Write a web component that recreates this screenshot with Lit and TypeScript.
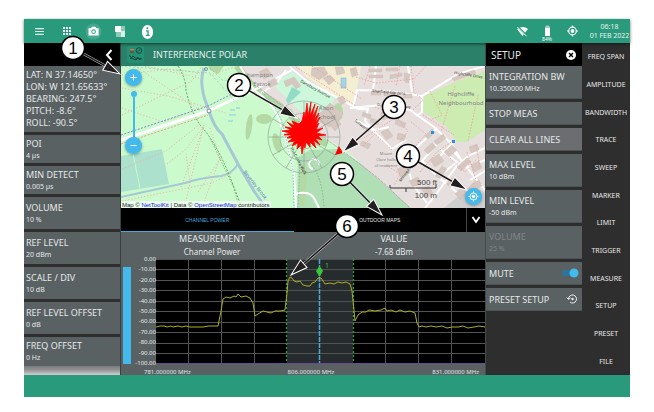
import { LitElement, html, svg, css } from "lit";
import { customElement, state } from "lit/decorators.js";

type Item = { label: string; value?: string; kind?: string };

const READOUTS: Item[] = [
  { label: "POI", value: "4 µs", kind: "short" },
  { label: "MIN DETECT", value: "0.005 µs", kind: "short" },
  { label: "VOLUME", value: "10 %" },
  { label: "REF LEVEL", value: "20 dBm" },
  { label: "SCALE / DIV", value: "10 dB" },
  { label: "REF LEVEL OFFSET", value: "0 dB" },
  { label: "FREQ OFFSET", value: "0 Hz", kind: "last" },
];
const MENUS = ["FREQ SPAN", "AMPLITUDE", "BANDWIDTH", "TRACE", "SWEEP", "MARKER", "LIMIT", "TRIGGER", "MEASURE", "SETUP", "PRESET", "FILE"];

const BUILDINGS = [
  "M259 72l8-4 5 7-8 4z", "M267 82l8-4 3 6-8 4z", "M284 81l10-4 7 9-5 3-4-5-6 3z", "M312 68l12-1 4 7-9 6-8-5z", "M323 78l7-3 5 5-6 5z",
  "M335 67h8l2 6-8 2z", "M350 69l6-2 2 8-6 2z", "M318 115l12-12 13 10-6 10-8 4-9-5z", "M326 121l8-5 7 8-6 7z", "M337 98l6-2 3 6-5 3z",
  "M369 69h13v3h-13z", "M386 68h12v3h-12z", "M369 75h14v3h-14z", "M390 75l12-2v3l-12 3z", "M404 73l6 1-1 9-4-1z", "M452 78l22-8 2 3-22 8z",
  "M371 91h10v4h-10z", "M384 92h11v4h-11z", "M403 94h9v4h-9z", "M386 102h9v4h-9z", "M363 112l8 3-1 4-8-3z", "M371 118l8 3-1 4-8-3z",
  "M380 113l7-3 3 7-7 3z", "M396 119l10 4-2 5-9-4z", "M381 132l7-3 5 7-7 4z", "M398 133l8 2-2 6-7-2z", "M362 141l9 3-3 5-8-4z",
  "M425 136l7-7 3 3-7 7z", "M434 141l9-7 3 4-9 7z", "M424 150l8-7 4 4-8 7z", "M430 160l9-6 5 7-9 6z", "M444 152l8-7 5 5-8 7z",
  "M435 176l7-10 5 3-7 10z", "M446 184l8-7 4 5-8 6z", "M457 167l10-9 4 4-10 9z", "M469 147l8-3 2 6-8 3z", "M471 165l8-4 3 7-8 4z",
  "M397 169l9-4 4 8-9 5z", "M409 181l9-4 3 6-8 4z", "M422 189l7-3 4 7-7 4z", "M455 194l7-7 5 5-7 7z", "M472 184l7-4 3 6-7 4z",
];
const PATHS = [
  "M122 88l46 8 58 17", "M122 75l46-6 33 4", "M122 108l42 14 36-14", "M122 115l70-34 10-15", "M135 66l65 44", "M167 164l18-14 20-25",
  "M204 125l-14 58", "M181 187l22-58", "M122 201l90-18 20-10", "M184 208l6-24-4-30", "M210 128l10 30-18 50", "M222 156l-24 36",
  "M122 169l44-18 38-30", "M210 75l28-9", "M145 66l54 12",
];
const STREET_PATHS = [
  "M356 77l20 6 38-4 12-13", "M370 66l-6 20", "M400 66l-4 20", "M411 66l3 26 9 8-11 11", "M392 98v22l-28 18", "M375 107l20 8 13 16-9 12",
  "M411 122l15 12-16 18 6 14", "M430 91l12 24-12 5", "M455 86l-14 46", "M420 172l17-20 17-12", "M450 158l15 14 11-12", "M467 152l9 28-16 20",
  "M363 146l12-12 18 17", "M386 165l14 9-6 12", "M478 95l-10 46", "M296 67l60 39", "M312 66l50 33", "M423 115l31 20", "M476 145l4 22",
];
const ROADS = [
  "M254 90c18 12 24 24 28 38c5 14 9 30 12 48l2 32", "M295 194q16-4 20 6l4 8", "M240 66l14 24 38-20", "M290 67l18 15 50 27h10l-3 12 9 10 18 18 14-9",
  "M350 108l32-3 28 5 24 17 17 16 12 20 22 27", "M353 107l4-17 32 1 33 5 36-22 27-8", "M422 96v16l-6 4", "M355 120l20 10 14-3",
  "M437 128l-21 20-9 17 6 20 14 18", "M445 135l-23 26 16 16 19-15-16-12", "M452 144l-18 18", "M485 148l-17 8-12 11-19 26-12 15", "M438 177l21 17",
  "M402 149l14 9", "M454 152l14 15 17-7", "M376 66l-3 25", "M408 66l4 26", "M470 180l15-9", "M261 93l15-9 10-14", "M313 169a5 5 0 1 1 6 -4",
];

const BLOB =
  "302,154 301,145 297,149 298,143 292,146 295,141 288,142 293,138 287,138 292,135 284,135 290,133 282,131 291,130 285,127 293,128 287,122 295,126 292,121 299,124 302,121 304,112 305,118 307,103 308,116 311,102 310,116 315,104 312,118 318,106 314,120 319,113 315,123 320,117 316,126 319,123 316,130 323,128 316,133 326,135 318,136 322,140 315,138 320,145 313,140 316,148 310,142 310,147 306,142 305,148 304,144";

const TRACE =
  "156,327 160,326 164,326 167,327 171,326 173,327 178,326 182,327 186,326 190,327 203,327 209,326 218,326 221,311 223,299 226,297 230,298 234,296 236,297 238,294 241,297 246,296 250,298 253,303 255,316 258,314 263,311 267,312 271,313 275,311 280,311 285,310 287,293 288,281 290,277 292,278 294,281 297,282 300,281 303,285 307,286 310,286 312,283 315,282 318,278 321,278 323,281 325,284 330,283 334,284 338,282 342,283 346,282 350,284 352,291 354,310 355,321 358,315 362,312 366,312 369,310 375,311 381,310 385,308 387,311 391,310 396,312 400,310 405,312 410,311 415,313 417,323 419,327 422,326 426,327 431,326 436,327 442,326 447,328 452,327 458,327 463,326 468,328 474,327 479,326 485,327";

const CALLOUTS = [
  { n: 1, x: 73, y: 48, tx: 120, ty: 74 },
  { n: 2, x: 239, y: 85, tx: 297, ty: 118 },
  { n: 3, x: 394, y: 107, tx: 343, ty: 152 },
  { n: 4, x: 408, y: 156, tx: 467, ty: 190 },
  { n: 5, x: 342, y: 174, tx: 382, ty: 215 },
  { n: 6, x: 347, y: 226, tx: 291, ty: 275 },
];

const BASE = css`
  * { box-sizing: border-box; }
  button { font: inherit; color: inherit; background: none; border: 0; padding: 0; margin: 0; cursor: pointer; }
  svg { display: block; }
`;

@customElement("status-bar")
class StatusBar extends LitElement {
  static styles = [BASE, css`
    :host { display: flex; align-items: center; height: 24px; background: #2a9a7c; color: #fff; box-shadow: 0 1px 3px #0008; z-index: 1; position: relative; }
    .group { display: flex; align-items: center; }
    .tools { gap: 10px; padding-left: 7px; flex: 1; }
    .icon { width: 17px; height: 17px; }
    .icon svg { width: 17px; height: 17px; }
    .state { gap: 8px; }
    .clock { width: 41px; text-align: center; font-size: 7px; line-height: 9px; color: #e4f4ee; white-space: nowrap; }
    .pct { font: 5px "Noto Sans", sans-serif; fill: #fff; }
  `];
  render() {
    return html`
      <div class="group tools">
        <button class="icon" aria-label="Menu"><svg viewBox="0 0 17 17"><path d="M4 5.700h9M4 8.500h9M4 11.300h9" stroke="#dff3ea" stroke-width="1.200"/></svg></button>
        <button class="icon" aria-label="Apps"><svg viewBox="0 0 17 17">${[5, 8, 11].map((y) => [5, 8, 11].map((x) => svg`<rect x=${x} y=${y - 1} width="2" height="2" fill="#eefaf5"/>`))}</svg></button>
        <button class="icon" aria-label="Screenshot"><svg viewBox="0 0 17 17"><circle cx="8.500" cy="8.500" r="8" fill="#45a88e"/><path fill="#fff" fill-rule="evenodd" d="M3.500 5.200h2.500l1-1.400h3.400l1 1.400h2.200v7.300H3.500zM8.600 6.300a2.400 2.400 0 1 0 0 4.800 2.400 2.400 0 0 0 0-4.800zM8.600 7.400a1.300 1.300 0 1 1 0 2.600 1.300 1.300 0 0 1 0-2.600z"/></svg></button>
        <button class="icon" aria-label="Layout"><svg viewBox="0 0 17 17"><path fill="#fff" d="M3 3h6v6H3z"/><path fill="#8cc9b7" d="M9 3h4v5H9zM4 9h5v5H4z"/><path fill="#d9efe8" d="M9 8h4v6H9z"/></svg></button>
        <button class="icon" aria-label="Information"><svg viewBox="0 0 17 17"><ellipse cx="8.500" cy="9" rx="5.600" ry="7" fill="#fff"/><path d="M7 7.800h2v4.200M6.800 12.400h3.800" stroke="#2a9a7c" stroke-width="1.300" fill="none"/><circle cx="8.400" cy="5.300" r="1" fill="#2a9a7c"/></svg></button>
      </div>
      <div class="group state">
        <svg width="17" height="17" viewBox="0 0 17 17"><path fill="#fff" d="M3 6q6-4 11 0l-5.500 7z"/><path d="M3 3l10 10" stroke="#2a9a7c" stroke-width="2.200"/><path d="M3.500 4.200l9 9" stroke="#fff" stroke-width="1"/></svg>
        <svg width="17" height="22" viewBox="0 0 17 22"><path fill="#fff" d="M6 8h5v8H6z"/><path fill="#9fd2c3" d="M7 5.500h3v1h1V8H6V6.500h1z"/><text class="pct" x="8" y="21" text-anchor="middle">84%</text></svg>
        <svg width="17" height="17" viewBox="0 0 17 17"><g fill="none" stroke="#fff" stroke-width="1.200"><circle cx="8.500" cy="8" r="3.800"/><path d="M8.500 2.500v1.700M8.500 11.800v1.700M3 8h1.700M12.300 8H14"/></g><circle cx="8.500" cy="8" r="1.900" fill="#fff"/></svg>
        <time class="clock" datetime="2022-02-01T06:18">06:18<br />01 FEB 2022</time>
      </div>`;
  }
}

@customElement("map-view")
class MapView extends LitElement {
  @state() zoom = 0;
  static styles = [BASE, css`
    :host { display: block; position: relative; overflow: hidden; background: #cbfacd; }
    .map { width: 100%; height: auto; }
    .credit { position: absolute; left: 0; bottom: -1px; padding: 0 1px; background: #fff9; color: #222; font: 6px/8px "Liberation Sans", sans-serif; white-space: nowrap; }
    .credit a { color: #1414e0; text-decoration: none; }
    .zoom { position: absolute; left: 4px; top: 3px; display: flex; flex-direction: column; align-items: center; }
    .round { width: 17px; height: 17px; border-radius: 50%; background: #43b9ec; box-shadow: 0 1px 3px #0005; display: grid; place-items: center; }
    .range { appearance: none; writing-mode: vertical-lr; width: 6px; height: 51px; margin: 5px 0 -5px; padding: 0; background: linear-gradient(#43b9ec, #43b9ec) center / 2px 100% no-repeat; }
    .range::-webkit-slider-thumb { appearance: none; width: 6px; height: 6px; border-radius: 50%; background: #43b9ec; }
    .locate { position: absolute; right: 3px; bottom: 3px; }
    .place { font: 6px "Noto Sans", sans-serif; fill: #828282; text-anchor: middle; }
    .small { font-size: 4px; }
    .street { font: 4px "Noto Sans", sans-serif; fill: #333; }
    .water { font: 5px "Noto Sans", sans-serif; fill: #5c7fb8; }
    .scale { font: 8px "Liberation Sans", sans-serif; fill: #444; text-anchor: end; }
  `];
  render() {
    return html`
      <svg class="map" viewBox="121 66 364 142" role="img" aria-label="Map">
        <rect x="121" y="66" width="364" height="142" fill="#cbfacd"/>
        <path d="M121 156l41-7 7 35-48 8z" fill="#ace1cd"/><path d="M133 154l7 34" stroke="#cbfacd"/>
        <path d="M236 66h249v142h-75l-33-29-27-26-38-24-14-12-36-26-10-10z" fill="#e7dfde"/>
        <path d="M298 157l12-7 28-1 22 14 22 19 29 26H297z" fill="#b0dfb5"/>
        <path d="M237 66l18 24 34 22 16 22 22 10" stroke="#a6cf96" stroke-width="7" fill="none" opacity=".8"/>
        <path d="M298 66h63l-3 17-4 24-25-14-24-17z" fill="#f4eed2"/>
        <path d="M272 84l20-12 43 26-12 24-20-8z" fill="#ccf7da"/>
        <path d="M286 100l6-13 9 5-13 12z" fill="#92dcc6"/>
        <path d="M341 78h5v10h-5z" fill="#a6d5e6" stroke="#78acc2" stroke-width=".5"/>
        <path d="M424 96l36-16 25-9v59l-18 12h-10l-12-17-22-13z" fill="#cdecb2"/>
        <path d="M444 208l16-13 12-11 13 9v15z" fill="#cfcfcf"/>
        <g fill="#b4d9a5"><ellipse cx="249" cy="127" rx="3" ry="13" transform="rotate(8 249 127)"/><ellipse cx="264" cy="119" rx="8" ry="5"/><ellipse cx="277" cy="143" rx="4" ry="10" transform="rotate(-15 277 143)"/><ellipse cx="338" cy="112" rx="5" ry="9"/><path d="M300 162l8 6-4 38h-6z"/><path d="M208 66h16l-6 8-8-4z"/></g>
        <g fill="none" stroke="#a6c8d4">
          <path d="M204 68q-6 16 4 40q6 20 14 26l16 30 16 27 12 17" stroke-width="3"/>
          <path d="M238 164q-6 10-17 12-22 2-36 7l-64 14" stroke-width="2"/>
          <path d="M230 110h5M229 115h7M236 108h4M228 121h5" stroke="#65bfdc" stroke-width=".7"/>
        </g>
        <path d="M178 66q8 12 8 25 5 20 14 34 16 17 30 52l12 31" fill="none" stroke="#58a962" stroke-dasharray="2 1.500"/>
        <path d="M210 138l24 50 5 20M310 163q12 12 14 44" fill="none" stroke="#83b67e" stroke-dasharray="1.500 1.500"/>
        <g fill="none" stroke="#efaaa5" stroke-width=".9" stroke-dasharray="1.200 2">${PATHS.map((d) => svg`<path d=${d}/>`)}</g>
        <path d="M121 140l87-29 24-11 22-10" stroke="#fff" stroke-width="3" fill="none"/>
        <path d="M121 135l87-29 24-12" stroke="#7d87cf" stroke-dasharray="2 1.500" fill="none"/>
        <path d="M121 144l87-29" stroke="#ee9b91" stroke-dasharray="2 1.500" fill="none"/>
        <g fill="none" stroke="#fff" stroke-width="2">${ROADS.map((d) => svg`<path d=${d}/>`)}</g>
        <g fill="#d6c8c0" stroke="#c2b3aa" stroke-width=".3">${BUILDINGS.map((d) => svg`<path d=${d}/>`)}</g>
        <g fill="none" stroke="#ee9a98" stroke-width=".8" stroke-dasharray="1.500 1.500">${STREET_PATHS.map((d) => svg`<path d=${d}/>`)}</g>
        <path d="M257 86l28 22 26 20 33 24 34 26 32 30" fill="none" stroke="#c98cc1" stroke-dasharray="3 1" opacity=".8"/>
        <path d="M262 92q18 18 22 38l9 40 1 38M300 161l-2 47" fill="none" stroke="#7babc9" stroke-width=".8" stroke-dasharray="1.500 1.500"/>
        <path d="M121 66l89 7 25 28M210 68l12 12 20 1" fill="none" stroke="#7bafc9" stroke-width=".8" stroke-dasharray="2 2" opacity=".6"/>
        <g fill="#2a92d8"><path d="M431 131h3v3h-3zM452 140h3v3h-3z"/></g>
        <g fill="none" stroke="#7a8ea8" stroke-width="1"><circle cx="206" cy="69" r="1.500"/><circle cx="209" cy="111" r="2"/></g>
        <g><text class="place" x="260" y="77">hampton</text><text class="place" x="262" y="86">Estate</text>
          <text class="place" x="326" y="110">Alton</text><text class="place" x="326" y="119">School</text>
          <text class="place" x="461" y="96">Highcliffe</text><text class="place" x="461" y="105">Neighbourhood</text>
          <text class="place small" x="386" y="155">Mount</text><text class="place small" x="386" y="161">Clare halls</text><text class="place small" x="386" y="167">of residence</text></g>
        <text class="street" transform="translate(300 82) rotate(29)">Danebury Avenue</text>
        <text class="street" transform="translate(372 92) rotate(5)">Sherfield Gardens</text>
        <text class="street" transform="translate(377 106) rotate(4)">Danebury Avenue</text>
        <text class="street" transform="translate(454 74) rotate(9)">Highcliffe Drive</text>
        <text class="street" transform="translate(354 121) rotate(38)">Tunworth</text>
        <text class="street" transform="translate(401 182) rotate(-54)">Minstead Gdns</text>
        <text class="street" transform="translate(290 148) rotate(62)">The Centre Walk</text>
        <text class="water" transform="translate(243 172) rotate(52)">Beverley Brook</text>
        <g fill="none" stroke="#7e8f86" stroke-width=".7" opacity=".7">
          ${[12, 24, 36].map((r) => svg`<circle cx="304" cy="137" r=${r}/>`)}
          ${[0, 30, 60, 90, 120, 150].map((a) => svg`<path d="M268 137h72" transform="rotate(${a} 304 137)"/>`)}
        </g>
        <polygon points=${BLOB} fill="#f00" stroke="#f00" stroke-width=".8"/>
        <path d="M339 146l4 7-8 2z" fill="#f00"/>
        <path d="M390 185v3h46v-3M406 188v4" fill="none" stroke="#333" stroke-width="1"/>
        <text class="scale" x="437" y="185">500 ft</text><text class="scale" x="437" y="198">100 m</text>
      </svg>
      <div class="credit">Map © <a href="#nettoolkit">NetToolKit</a> | Data © <a href="#osm">OpenStreetMap</a> contributors</div>
      <div class="zoom">
        <button class="round" aria-label="Zoom in"><svg width="17" height="17"><path d="M5.500 8.500h6M8.500 5.500v6" stroke="#fff"/></svg></button>
        <input class="range" type="range" aria-label="Zoom level" min="0" max="18" .value=${String(this.zoom)} />
        <button class="round" aria-label="Zoom out"><svg width="17" height="17"><path d="M5.500 8.500h6" stroke="#fff"/></svg></button>
      </div>
      <button class="round locate" aria-label="Centre on my position"><svg width="17" height="17"><g fill="none" stroke="#fff"><circle cx="8.500" cy="8.500" r="3.500"/><path d="M8.500 3.500v1.500M8.500 12v1.500M3.500 8.500H5M12 8.500h1.500"/></g><circle cx="8.500" cy="8.500" r="1.700" fill="#fff"/></svg></button>`;
  }
}

@customElement("spectrum-chart")
class SpectrumChart extends LitElement {
  static styles = [BASE, css`
    :host { display: block; background: #596163; }
    .chart { width: 100%; height: auto; overflow: visible; }
    .tick { font: 6px "Noto Sans", sans-serif; fill: #e4e6e6; }
    .end { text-anchor: end; }
    .mid { text-anchor: middle; }
    .marker { font: 7px "Noto Sans", sans-serif; fill: #35b83c; }
  `];
  render() {
    const rows = Array.from({ length: 11 }, (_, i) => i);
    return html`<svg class="chart" viewBox="121 258 364 117" role="img" aria-label="Channel power spectrum">
      <rect x="156" y="259" width="329" height="104" fill="#000"/>
      <rect x="287" y="259" width="66" height="104" fill="#262c2d"/>
      <g stroke="#525454" stroke-width="1">
        ${rows.slice(0, 10).map((i) => svg`<path d="M156 ${Math.round(259 + i * 10.45) + 0.5}H485"/>`)}
        ${rows.slice(1, 10).filter((i) => i < 4 || i > 6).map((i) => svg`<path d="M${Math.round(155 + i * 32.9) + 0.5} 259V363"/>`)}
      </g>
      <path d="M286.500 259V363M353.500 259V363" stroke="#35a83c" stroke-width="1.200" stroke-dasharray="2 2"/>
      <path d="M319.500 259V364" stroke="#4aa9dc" stroke-width="1.500" stroke-dasharray="5 1"/>
      <path d="M156 363.500H485" stroke="#6a4a96"/>
      <polyline points=${TRACE} fill="none" stroke="#aeae22" stroke-width="1"/>
      <path d="M319.500 266l3.500 5-3.500 6-3.500-6z" fill="#36c83c"/>
      <text class="marker" x="325" y="268">1</text>
      <rect x="123" y="267" width="8" height="97" fill="#43b9ec"/>
      ${rows.map((i) => svg`<text class="tick end" x="156" y=${Math.round(261 + i * 10.4)}>${i ? "-" : ""}${i * 10}.00</text>`)}
      <text class="tick" x="144" y="374">781.000000 MHz</text>
      <text class="tick mid" x="311" y="374">806.000000 MHz</text>
      <text class="tick end" x="479" y="374">831.000000 MHz</text>
    </svg>`;
  }
}

@customElement("setup-panel")
class SetupPanel extends LitElement {
  @state() mute = true;
  static styles = [BASE, css`
    :host { display: flex; flex-direction: column; gap: 3px; background: #2e2e2e; color: #e6e8e8; font-size: 9px; border-left: 1px solid #454a4b; }
    .head { display: flex; align-items: center; justify-content: space-between; height: 23px; margin-bottom: -3px; padding: 0 6px 0 5px; background: #000; font-size: 10px; }
    .title { font: inherit; margin: 0; }
    .close { width: 10px; height: 10px; }
    .cell { display: flex; flex-direction: column; justify-content: center; height: 33px; padding: 0 3px; background: #596163; text-align: left; line-height: 13px; white-space: nowrap; border-bottom: 1px solid #4b5355; }
    .row { flex-direction: row; align-items: center; justify-content: space-between; height: 23px; }
    .pressed { background: #6b6d71; }
    .off { color: #808687; }
    .val { font-size: 7px; line-height: 11px; }
    .switch { appearance: none; width: 17px; height: 10px; margin: 0; border-radius: 5px; background: radial-gradient(circle at 12px 5px, #43b9ec 4px, transparent 5px), linear-gradient(#2c7499, #2c7499) 0 center / 13px 6px no-repeat; }
  `];
  render() {
    const cell = (label: string, value: string, off = false) =>
      html`<button class="cell ${off ? "off" : ""}" ?disabled=${off}><span>${label}</span><span class="val">${value}</span></button>`;
    return html`
      <div class="head"><h2 class="title">SETUP</h2><button class="close" aria-label="Close"><svg width="10" height="10"><circle cx="5" cy="5" r="5" fill="#fff"/><path d="M3 3l4 4M7 3l-4 4" stroke="#000" stroke-width="1.400"/></svg></button></div>
      ${cell("INTEGRATION BW", "10.350000 MHz")}
      <button class="cell row">STOP MEAS</button>
      <button class="cell row pressed">CLEAR ALL LINES</button>
      ${cell("MAX LEVEL", "10 dBm")}${cell("MIN LEVEL", "-50 dBm")}${cell("VOLUME", "25 %", true)}
      <label class="cell row">MUTE <input class="switch" type="checkbox" .checked=${this.mute} /></label>
      <button class="cell row">PRESET SETUP <svg width="13" height="12"><path d="M2.500 6a4 4 0 1 1 1.600 3.200M.800 4.500l1.700 2 2-1.700" fill="none" stroke="#eee" stroke-width="1"/><circle cx="6.500" cy="6" r="1.200" fill="#eee"/></svg></button>`;
  }
}

@customElement("callout-layer")
class CalloutLayer extends LitElement {
  static styles = [BASE, css`
    :host { display: block; position: absolute; inset: 0; pointer-events: none; z-index: 2; }
    .layer { width: 100%; height: auto; }
    .num { font: 17px "Liberation Sans", sans-serif; text-anchor: middle; fill: #000; }
  `];
  render() {
    return html`<svg class="layer" viewBox="0 0 654 412">${CALLOUTS.map((c) => {
      const angle = (Math.atan2(c.ty - c.y, c.tx - c.x) * 180) / Math.PI;
      const len = Math.hypot(c.ty - c.y, c.tx - c.x);
      return svg`<g transform="translate(${c.x} ${c.y}) rotate(${angle})">
          <path d="M10 0H${len - 12}" stroke="#fff" stroke-width="2.600" opacity=".7"/>
          <path d="M10 0H${len - 12}" stroke="#1a1718" stroke-width="1.500"/>
          <path d="M${len} 0l-17-5v10z" fill="#231f20" stroke="#fff" stroke-width="1"/>
        </g>
        <circle cx=${c.x} cy=${c.y} r="11.500" fill="#fff" stroke="#000" stroke-width="1.500"/>
        <text class="num" x=${c.x} y=${c.y + 6}>${c.n}</text>`;
    })}</svg>`;
  }
}

@customElement("app-root")
class AppRoot extends LitElement {
  static styles = [BASE, css`
    :host { display: block; position: relative; padding: 19px 24px 15px; background: #fff; font-family: "Noto Sans", sans-serif; }
    .body { display: grid; grid-template-columns: 97px minmax(0, 1fr) 97px 48px; background: #2e2e2e; }
    .left { display: flex; flex-direction: column; gap: 3px; color: #e6e8e8; font-size: 9px; background: #2e2e2e; border-right: 1px solid #3b4041; }
    .back { display: flex; align-items: center; justify-content: flex-end; height: 23px; padding-right: 7px; margin-bottom: -3px; background: #000; }
    .fix { height: 66px; margin: 0; padding: 3px 2px; background: #596163; line-height: 12px; white-space: nowrap; }
    .cell { display: flex; flex-direction: column; justify-content: center; height: 32px; padding: 0 2px; background: #596163; text-align: left; line-height: 12px; white-space: nowrap; }
    .short { height: 28px; }
    .last { height: 29px; }
    .val { font-size: 7px; line-height: 11px; }
    .more { flex: 1; margin-top: -3px; background: linear-gradient(#777b7c, #999 50%, #d0d0d0); }
    .head { display: flex; align-items: center; gap: 9px; height: 23px; padding-left: 6px; background: #2a8069; color: #e6f0ec; font-size: 9px; }
    .name { font: inherit; margin: 0; }
    .tabs { display: grid; grid-template-columns: 1fr 1fr 19px; height: 24px; background: #000; color: #e6e6e6; font: 5px "Liberation Sans", sans-serif; }
    .tab { border-bottom: 1px solid #000; }
    .on { color: #43a9dc; border-color: #43a9dc; }
    .fold { display: grid; place-items: center; border-left: 1px solid #444; }
    .data { width: 100%; table-layout: fixed; border-collapse: collapse; background: #596163; color: #e6e8e8; text-align: center; }
    .data th { padding: 0; font-weight: 400; font-size: 9px; line-height: 13px; }
    .data td { padding: 0; font-size: 8px; line-height: 13px; }
    .menus { display: grid; grid-auto-rows: 1fr; color: #e6e6e6; font-size: 7px; white-space: nowrap; }
    .menus .menu { display: grid; place-content: center; }
    .foot { height: 22px; background: #2a9a7c; }
  `];
  render() {
    return html`
      <status-bar></status-bar>
      <main class="body">
        <section class="left">
          <button class="back" aria-label="Collapse"><svg width="8" height="12"><path d="M6.500 1L2 6l4.500 5" fill="none" stroke="#fff" stroke-width="2"/></svg></button>
          <p class="fix">LAT: N 37.14650°<br />LON: W 121.65633°<br />BEARING: 247.5°<br />PITCH: -8.6°<br />ROLL: -90.5°</p>
          ${READOUTS.map((r) => html`<button class="cell ${r.kind ?? ""}"><span>${r.label}</span><span class="val">${r.value}</span></button>`)}
          <div class="more"></div>
        </section>
        <section>
          <header class="head">
            <svg width="17" height="17"><rect width="17" height="17" rx="2" fill="#249174"/><path d="M3 3h4v4H3z" fill="#5d5750"/><path d="M3 3h4v1.500H3z" fill="#d77a45"/><circle cx="12" cy="4.500" r="2.800" fill="none" stroke="#16493d"/><path d="M11 5.500l2-2" stroke="#16493d"/><path d="M2 9.500l3 2 1-1.500 3 2.500 2-1 1 2 3-1M3 12l4 1 2 1 2-2 3 1" fill="none" stroke="#173f37" stroke-width=".900"/></svg>
            <h1 class="name">INTERFERENCE POLAR</h1>
          </header>
          <map-view></map-view>
          <nav class="tabs"><button class="tab on">CHANNEL POWER</button><button class="tab">OUTDOOR MAPS</button><button class="fold" aria-label="Collapse"><svg width="10" height="8"><path d="M1.500 1L5 6l3.500-5" fill="none" stroke="#fff" stroke-width="1.800"/></svg></button></nav>
          <table class="data"><thead><tr><th>MEASUREMENT</th><th>VALUE</th></tr></thead><tbody><tr><td>Channel Power</td><td>-7.68 dBm</td></tr></tbody></table>
          <spectrum-chart></spectrum-chart>
        </section>
        <setup-panel></setup-panel>
        <nav class="menus">${MENUS.map((m) => html`<button class="menu">${m}</button>`)}</nav>
      </main>
      <footer class="foot"></footer>
      <callout-layer></callout-layer>`;
  }
}
